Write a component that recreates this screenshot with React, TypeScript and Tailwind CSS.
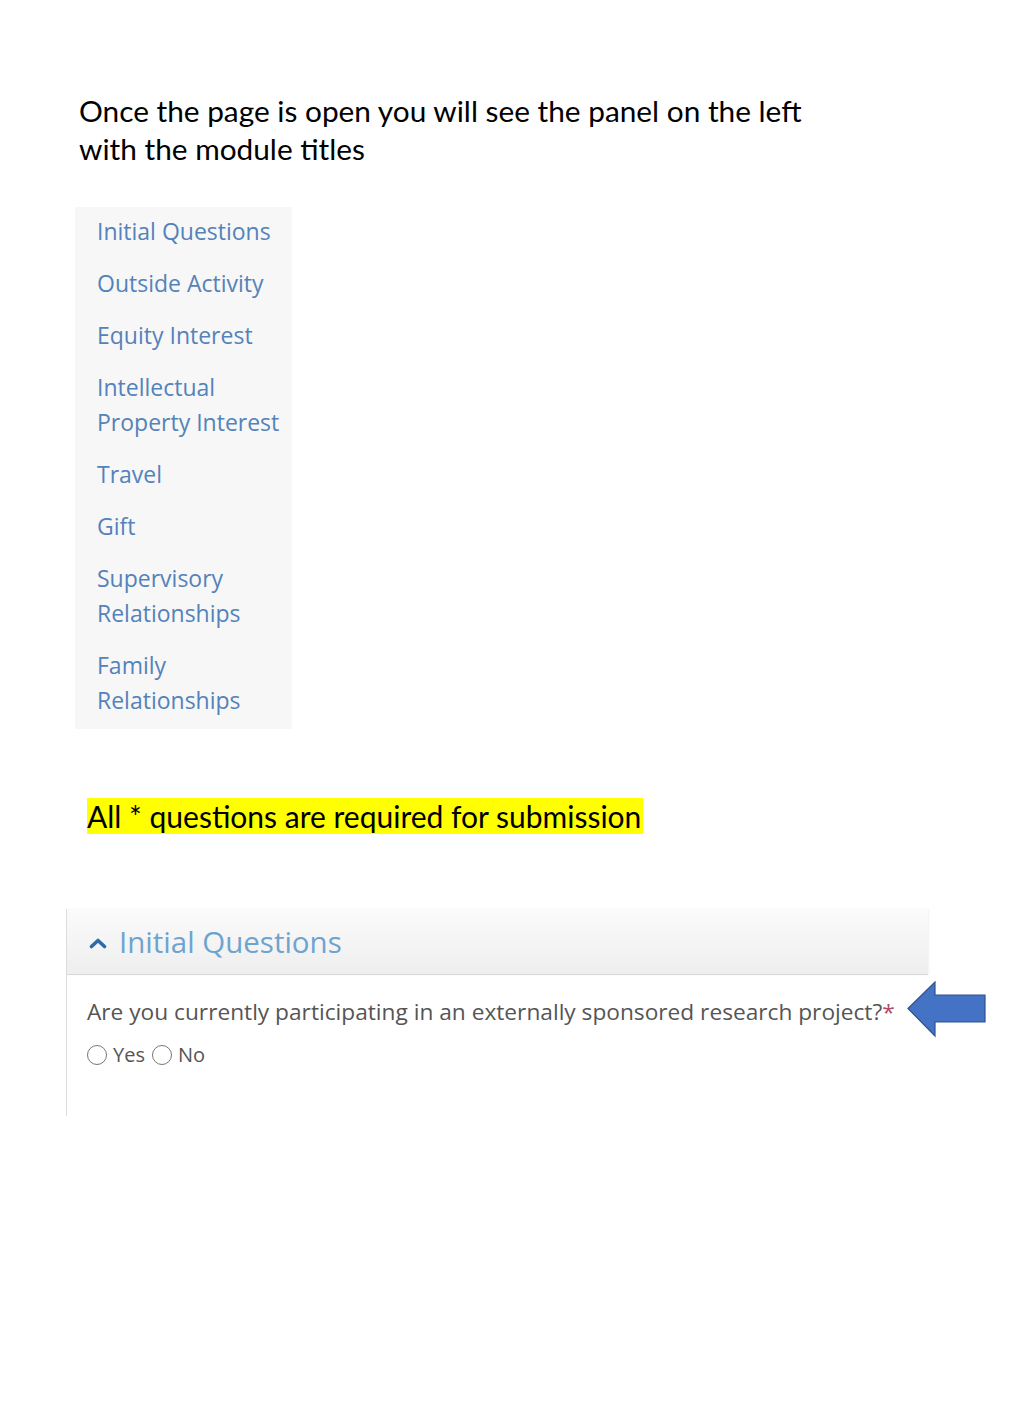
import React from "react";

const items: string[][] = [
  ["Initial Questions"],
  ["Outside Activity"],
  ["Equity Interest"],
  ["Intellectual", "Property Interest"],
  ["Travel"],
  ["Gift"],
  ["Supervisory", "Relationships"],
  ["Family", "Relationships"],
];

export default function App() {
  return (
    <div className="relative w-[1024px] h-[1408px] bg-white overflow-hidden">
      <div className="pt-[92px] pl-[79px] text-[29.8px] leading-[38px] text-black font-['Lato','Liberation_Sans',sans-serif]">
        <p>Once the page is open you will see the panel on the left</p>
        <p>with the module titles</p>
      </div>

      <div className="ml-[75px] mt-[39px] w-[217px] bg-[#f7f7f7] pt-[7px] pb-[11px] pl-[22px] flex flex-col gap-[17px] font-['Open_Sans',sans-serif] text-[23px] leading-[35px] text-[#5482ba]">
        {items.map((lines, i) => (
          <div key={i}>
            {lines.map((l, j) => (
              <div key={j} className="whitespace-nowrap">{l}</div>
            ))}
          </div>
        ))}
      </div>

      <div className="mt-[68px] ml-[87px] font-['Lato','Liberation_Sans',sans-serif] text-[30px] leading-[38px] text-black">
        <span className="bg-[#ffff00] pr-[2px]">All * questions are required for submission</span>
      </div>

      <div className="relative mt-[74px] ml-[66px] w-[862px] h-[207px] border-l border-[#dddddd] font-['Open_Sans',sans-serif]">
        <div className="h-[66px] flex items-center gap-[12px] pl-[22px] bg-gradient-to-b from-[#fbfbfb] to-[#eeeeee] border-b border-[#d8d8d8] shadow-[1px_0_2px_rgba(0,0,0,0.06)]">
          <svg width="18" height="12" viewBox="0 0 18 12" className="mt-[2px]">
            <path d="M2.5 9.5 L9 3.5 L15.5 9.5" fill="none" stroke="#2f6aa8" strokeWidth="3.6" strokeLinecap="round" strokeLinejoin="round" />
          </svg>
          <span className="text-[29.5px] text-[#6fa3cf] leading-none">Initial Questions</span>
        </div>
        <div className="pl-[20px] pt-[21px]">
          <div className="text-[22.7px] leading-[32px] text-[#555555] whitespace-nowrap">
            Are you currently participating in an externally sponsored research project?<span className="text-[#b04a6a]">*</span>
          </div>
          <div className="mt-[13px] flex items-center text-[20px] leading-[28px] text-[#555555]">
            <span className="inline-block w-[20px] h-[20px] rounded-full border border-[#777777]" />
            <span className="ml-[6px]">Yes</span>
            <span className="ml-[7px] inline-block w-[20px] h-[20px] rounded-full border border-[#777777]" />
            <span className="ml-[6px]">No</span>
          </div>
        </div>
        <svg className="absolute left-[840px] top-[72px]" width="81" height="57" viewBox="0 0 81 57">
          <path d="M1 27.5 L28 1 L28 14 L78 14 L78 41 L28 41 L28 55 Z" fill="#4472c4" stroke="#2f528f" strokeWidth="1.2" />
        </svg>
      </div>
    </div>
  );
}
